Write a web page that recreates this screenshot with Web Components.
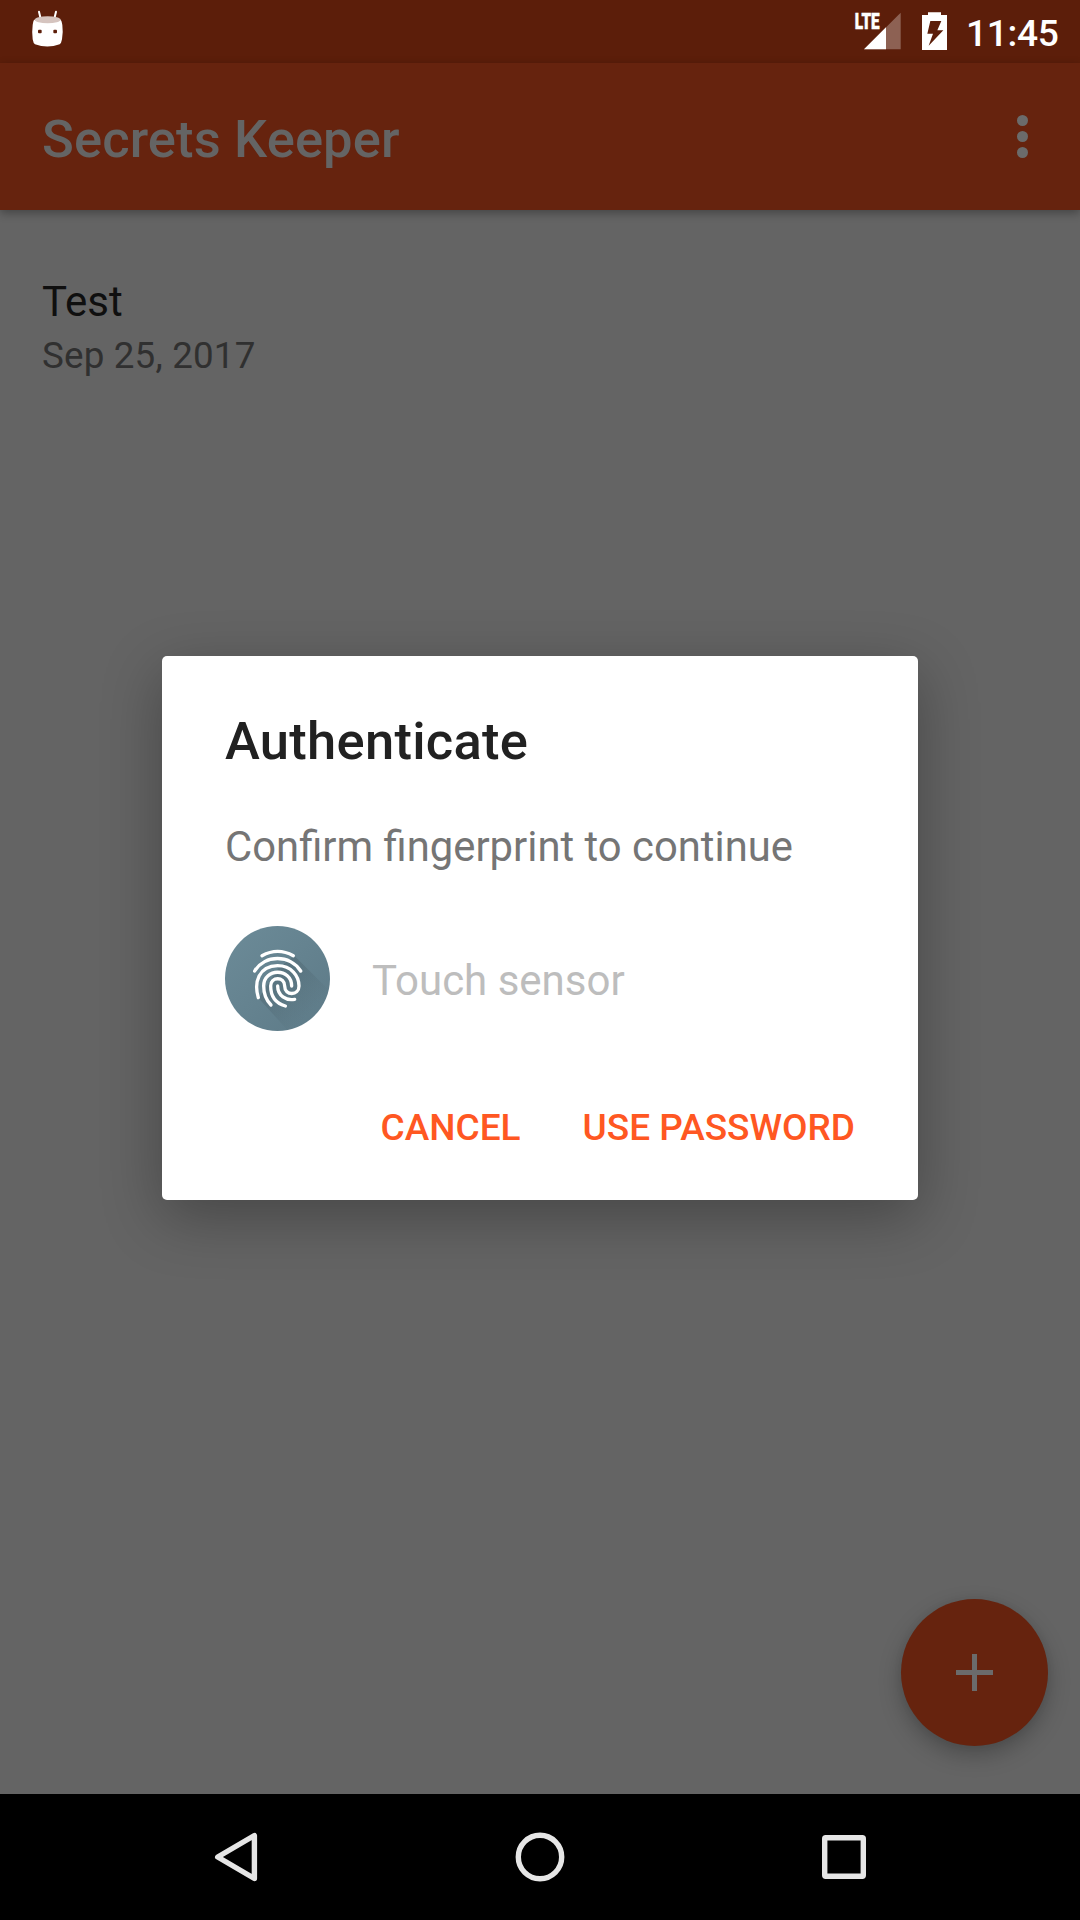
<!DOCTYPE html>
<html lang="en">
<head>
<meta charset="utf-8">
<title>Secrets Keeper</title>
<style>
html,body{margin:0;padding:0;background:#000}
body{width:1080px;height:1920px;overflow:hidden;font-family:Roboto,"Noto Sans",sans-serif}
</style>
</head>
<body>
<phone-screen>
  <status-bar slot="status" time="11:45"></status-bar>
  <app-bar slot="bar">Secrets Keeper</app-bar>
  <secret-item slot="content"><span>Test</span><span slot="date">Sep 25, 2017</span></secret-item>
  <add-button slot="fab"></add-button>
  <auth-dialog slot="dialog">
    <span slot="title">Authenticate</span>
    <span slot="message">Confirm fingerprint to continue</span>
    <finger-print slot="icon"></finger-print>
    <span slot="hint">Touch sensor</span>
    <flat-button slot="actions">CANCEL</flat-button>
    <flat-button slot="actions">USE PASSWORD</flat-button>
  </auth-dialog>
  <nav-bar slot="nav"></nav-bar>
</phone-screen>
<script>
const define = (name, html) => customElements.define(name, class extends HTMLElement {
  constructor() {
    super();
    this.attachShadow({mode: 'open'}).innerHTML = html.replace('{time}', this.getAttribute('time') || '');
  }
});

define('phone-screen', `
<style>
:host{display:flex;flex-direction:column;position:relative;width:1080px;height:1920px;background:#646464}
main{flex:1;padding-top:64px;overflow:hidden}
.fab{position:absolute;right:32px;bottom:174px}
.dialog{position:absolute;left:162px;top:656px;width:756px;height:544px}
</style>
<slot name="status"></slot><slot name="bar"></slot>
<main><slot name="content"></slot></main>
<slot name="nav"></slot>
<div class="fab"><slot name="fab"></slot></div>
<div class="dialog"><slot name="dialog"></slot></div>`);

define('status-bar', `
<style>
:host{display:flex;justify-content:space-between;height:63px;background:#5c1e0a;color:#fff}
svg{display:block;height:63px}
.right{display:flex}
.time{font-size:37.2px;font-weight:500;letter-spacing:-.35px;line-height:66px;width:115px;box-sizing:border-box;padding-left:1px;white-space:nowrap}
</style>
<svg width="80" viewBox="0 0 240 189">
  <path d="M117 35l5 21M168 35l-5 21" stroke="#fff" stroke-width="6" stroke-linecap="round"/>
  <path d="M103 59Q142 74 181 59Q185 60 187 75Q190 98 186 118Q184 130 179 133Q142 146 105 133Q100 130 98 118Q95 98 98 75Q100 60 103 59Z" fill="#fff"/>
  <ellipse cx="143" cy="59" rx="39" ry="10.5" fill="#d5c4bf"/>
  <rect x="114" y="89" width="11" height="11" rx="3" fill="#5c1e0a"/><rect x="160" y="89" width="11" height="11" rx="3" fill="#5c1e0a"/>
</svg>
<div class="right">
<svg width="135" viewBox="0 0 405 189">
  <path d="M212 38V148H102Z" fill="#fff" fill-opacity=".3"/>
  <path d="M168 82V148H102Z" fill="#fff"/>
  <text x="74" y="87" font-size="65" font-weight="900" fill="#fff" stroke="#fff" stroke-width="1.5" textLength="75" lengthAdjust="spacingAndGlyphs">LTE</text>
  <path fill-rule="evenodd" d="M276 45H294V37H333V45H351V150H276ZM301 63L292 101H309L296 137L340 91H322L334 63Z" fill="#fff"/>
</svg>
<div class="time">{time}</div>
</div>`);

define('app-bar', `
<style>
:host{display:flex;justify-content:space-between;align-items:center;height:147px;background:#66230e;color:#646464;box-shadow:0 3px 9px rgba(0,0,0,.32);position:relative}
.title{padding-left:42px;font-size:52.5px;font-weight:500;letter-spacing:.12px;line-height:62px;padding-top:4px;white-space:nowrap}
.menu{display:flex;flex-direction:column;gap:5px;margin-right:52px}
i{width:11px;height:11px;border-radius:50%;background:#6b6b6b}
</style>
<div class="title"><slot></slot></div><div class="menu"><i></i><i></i><i></i></div>`);

define('secret-item', `
<style>
:host{display:flex;flex-direction:column;padding-left:42px}
.name{font-size:42px;line-height:56px;color:#0f0f0f}
.date{font-size:36.75px;letter-spacing:.18px;line-height:52px;color:#303030}
</style>
<div class="name"><slot></slot></div><div class="date"><slot name="date"></slot></div>`);

define('add-button', `
<style>
:host{display:grid;place-items:center;width:147px;height:147px;border-radius:50%;background:#66230e;box-shadow:0 9px 22px rgba(0,0,0,.25),0 0 8px rgba(0,0,0,.05)}
svg{display:block}
</style>
<svg width="37" height="37" viewBox="0 0 37 37"><path d="M0 18.5H37M18.5 0V37" stroke="#6b6b6b" stroke-width="5"/></svg>`);

define('auth-dialog', `
<style>
:host{display:flex;flex-direction:column;box-sizing:border-box;width:100%;height:100%;background:#fff;border-radius:5px;padding:53px 63px 0;box-shadow:0 17px 60px rgba(0,0,0,.3)}
.title{font-size:52.5px;font-weight:500;letter-spacing:.28px;line-height:64px;color:#212121}
.message{font-size:42px;line-height:50px;margin-top:49px;color:#757575;white-space:nowrap}
.message ::slotted(span){display:inline-block;transform:scaleX(.9955);transform-origin:0 50%}
.row{display:flex;align-items:center;gap:42px;margin-top:54px;height:105px}
.hint{font-size:42px;line-height:50px;color:#bdbdbd;padding-top:4px}
.actions{display:flex;justify-content:flex-end;gap:62px;margin-top:73px}
</style>
<div class="title"><slot name="title"></slot></div>
<div class="message"><slot name="message"></slot></div>
<div class="row"><slot name="icon"></slot><div class="hint"><slot name="hint"></slot></div></div>
<div class="actions"><slot name="actions"></slot></div>`);

define('flat-button', `
<style>:host{display:block;font-size:37px;font-weight:500;line-height:48px;color:#ff5722;white-space:nowrap}</style>
<slot></slot>`);

define('finger-print', `
<style>:host{display:block;width:105px;height:105px}svg{display:block}</style>
<svg width="105" height="105" viewBox="30 33 315 315">
  <defs>
    <linearGradient id="d" x1="0" y1="0" x2="1" y2="1"><stop offset="0" stop-color="#6c8b98"/><stop offset="1" stop-color="#5d7a87"/></linearGradient>
    <linearGradient id="s" gradientUnits="userSpaceOnUse" x1="190" y1="190" x2="290" y2="290"><stop offset="0" stop-color="#263238" stop-opacity=".18"/><stop offset="1" stop-color="#263238" stop-opacity="0"/></linearGradient>
    <clipPath id="c"><circle cx="187.5" cy="190.5" r="157.5"/></clipPath>
  </defs>
  <circle cx="187.5" cy="190.5" r="157.5" fill="url(#d)"/>
  <path clip-path="url(#c)" d="M238 122L400 284V480H340L131 250L190 160Z" fill="url(#s)"/>
  <g fill="none" stroke="#fff" stroke-width="10" stroke-linecap="round">
    <path d="M141 122Q188 96 235 122"/>
    <path d="M119 168C149 118 226 118 257 168"/>
    <path d="M130 248C116 202 131 153 188 152C229 152 252 183 252 213C252 242 209 244 209 213C209 184 167 184 167 213C167 244 183 265 211 273"/>
    <path d="M168 270C148 250 146 230 146 213C146 158 230 158 230 213"/>
    <path d="M188 213C188 242 213 258 239 253"/>
  </g>
</svg>`);

define('nav-bar', `
<style>
:host{display:flex;justify-content:center;gap:244px;align-items:center;height:126px;background:#000}
svg{display:block;width:60px;height:60px;fill:none;stroke:#e6e6e6;stroke-width:5.4;stroke-linejoin:round}
</style>
<svg viewBox="206 1827 60 60"><path d="M254.4 1835.5V1878.5L217.7 1857Z"/></svg>
<svg viewBox="510 1827 60 60"><circle cx="540" cy="1857" r="21.7"/></svg>
<svg viewBox="814 1827 60 60"><rect x="824.7" y="1837.7" width="38.6" height="38.6" rx="1"/></svg>`);
</script>
</body>
</html>
